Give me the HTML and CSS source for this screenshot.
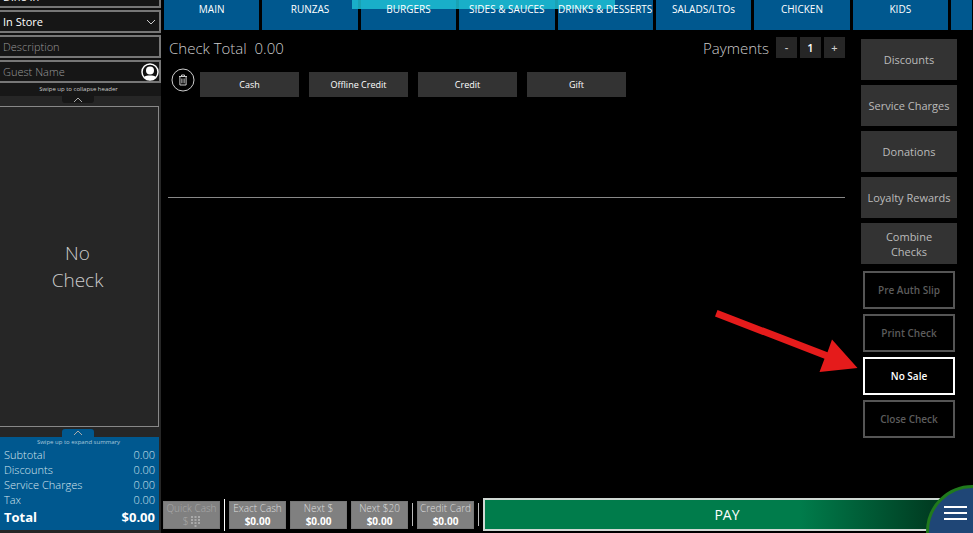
FILE: index.html
```html
<!DOCTYPE html>
<html lang="en">
<head>
    <meta charset="UTF-8">
    <meta name="viewport" content="width=device-width, initial-scale=1.0">
    <title>Check Payment</title>
    <link rel="stylesheet" href="styles.css">
</head>
<body>
    <div class="app">
        <aside class="sidebar">
            <form class="check-header">
                <div class="field">
                    <select aria-label="Order type"><option>Dine In</option></select>
                    <svg class="chevron" viewBox="0 0 10 6"><path d="M1 1l4 4 4-4"/></svg>
                </div>
                <div class="field">
                    <select aria-label="Revenue center"><option>In Store</option></select>
                    <svg class="chevron" viewBox="0 0 10 6"><path d="M1 1l4 4 4-4"/></svg>
                </div>
                <div class="field">
                    <input type="text" aria-label="Description" placeholder="Description">
                </div>
                <div class="field">
                    <input type="text" aria-label="Guest Name" placeholder="Guest Name">
                    <button type="button" class="guest-button" aria-label="Find guest">
                        <svg viewBox="0 0 18 18">
                            <circle cx="9" cy="9" r="8" fill="#111" stroke="#fff" stroke-width="1.5"/>
                            <circle cx="9" cy="7.5" r="4" fill="#fff"/>
                            <path d="M2.8 14.2C4.5 12.6 6.5 12.4 9 12.4s4.5.2 6.2 1.8A8 8 0 0 1 2.8 14.2z" fill="#fff"/>
                        </svg>
                    </button>
                </div>
            </form>
            <div class="swipe-hint">Swipe up to collapse header</div>
            <button class="handle" aria-label="Collapse header">
                <svg viewBox="0 0 10 6"><path d="M1 5l4-4 4 4"/></svg>
            </button>
            <div class="check-panel">No<br>Check</div>
            <button class="handle handle-blue" aria-label="Expand summary">
                <svg viewBox="0 0 10 6"><path d="M1 5l4-4 4 4"/></svg>
            </button>
            <div class="summary">
                <div class="summary-hint">Swipe up to expand summary</div>
                <table>
                    <tbody>
                        <tr><th scope="row">Subtotal</th><td>0.00</td></tr>
                        <tr><th scope="row">Discounts</th><td>0.00</td></tr>
                        <tr><th scope="row">Service Charges</th><td>0.00</td></tr>
                        <tr><th scope="row">Tax</th><td>0.00</td></tr>
                    </tbody>
                    <tfoot>
                        <tr><th scope="row">Total</th><td>$0.00</td></tr>
                    </tfoot>
                </table>
            </div>
        </aside>

        <main class="main">
            <nav class="tabs">
                <button><span>MAIN</span></button>
                <button><span>RUNZAS</span></button>
                <button><span>BURGERS</span></button>
                <button><span>SIDES &amp; SAUCES</span></button>
                <button><span>DRINKS &amp; DESSERTS</span></button>
                <button><span>SALADS/LTOs</span></button>
                <button><span>CHICKEN</span></button>
                <button><span>KIDS</span></button>
                <button class="tab-more" aria-label="More"></button>
                <div class="banner"></div>
            </nav>

            <div class="content">
                <section class="payment">
                    <div class="payment-top">
                        <h1>Check Total&nbsp; 0.00</h1>
                        <div class="stepper">
                            <span class="stepper-label">Payments</span>
                            <button aria-label="Fewer payments">-</button>
                            <button class="count">1</button>
                            <button aria-label="More payments">+</button>
                        </div>
                    </div>
                    <div class="tenders">
                        <button class="trash" aria-label="Remove payment">
                            <svg viewBox="0 0 24 24">
                                <circle cx="12" cy="12" r="11"/>
                                <path d="M8 8.5h8M10.5 8.5V7h3v1.5M8.9 8.5V17h6.2V8.5M10.9 10.5v4.8M13.1 10.5v4.8"/>
                            </svg>
                        </button>
                        <button class="tender">Cash</button>
                        <button class="tender">Offline Credit</button>
                        <button class="tender">Credit</button>
                        <button class="tender">Gift</button>
                    </div>
                </section>

                <section class="actions">
                    <button>Discounts</button>
                    <button>Service Charges</button>
                    <button>Donations</button>
                    <button>Loyalty Rewards</button>
                    <button>Combine<br>Checks</button>
                    <div class="outlined">
                        <button disabled>Pre Auth Slip</button>
                        <button disabled>Print Check</button>
                        <div class="callout">
                            <button>No Sale</button>
                            <svg class="arrow" viewBox="0 0 142 62">
                                <path d="M2.5 0L112.5 42.3 117 29.5 142.5 58 104.5 62 109.5 48.7 0 6.5z"/>
                            </svg>
                        </div>
                        <button disabled>Close Check</button>
                    </div>
                </section>
            </div>

            <footer class="pay-bar">
                <button class="quick" disabled>
                    <span>Quick Cash</span>
                    <span class="keypad">$
                        <svg viewBox="0 0 9 11">
                            <path d="M0 0h2v2H0zM3.5 0h2v2h-2zM7 0h2v2H7zM0 3h2v2H0zM3.5 3h2v2h-2zM7 3h2v2H7zM0 6h2v2H0zM3.5 6h2v2h-2zM7 6h2v2H7zM3.5 9h2v2h-2z"/>
                        </svg>
                    </span>
                </button>
                <span class="divider"></span>
                <button class="quick"><span>Exact Cash</span><b>$0.00</b></button>
                <button class="quick"><span>Next $</span><b>$0.00</b></button>
                <button class="quick"><span>Next $20</span><b>$0.00</b></button>
                <span class="divider short"></span>
                <button class="quick"><span>Credit Card</span><b>$0.00</b></button>
                <span class="divider short"></span>
                <button class="pay">PAY</button>
            </footer>
        </main>

        <button class="menu" aria-label="Menu">
            <svg viewBox="0 0 23 14"><path d="M0 1h23M0 7h23M0 13h23"/></svg>
        </button>
    </div>
</body>
</html>
```
FILE: styles.css
```css
* {
    box-sizing: border-box;
}
body {
    margin: 0;
    background: #000;
    color: #fff;
    font-family: "Open Sans", "Noto Sans", sans-serif;
    font-size: 11px;
}
button, input, select {
    font: inherit;
    color: inherit;
    margin: 0;
    padding: 0;
    border: none;
    border-radius: 0;
}
svg {
    display: block;
    fill: none;
}
.app {
    position: relative;
    display: flex;
    height: 100vh;
    overflow: hidden;
}

/* left column */
.sidebar {
    display: flex;
    flex-direction: column;
    flex: 0 0 161px;
    min-width: 0;
    background: #262626;
    padding-bottom: 3px;
}
/* header is scrolled partly out of view */
.check-header {
    display: flex;
    flex-direction: column;
    gap: 2px;
    margin-top: -15px;
    background: #111;
}
.field {
    display: flex;
    align-items: center;
    height: 23px;
    border: 2px solid #777;
    border-left: none;
    background: #161616;
    padding-right: 3px;
}
.field select, .field input {
    flex: 1;
    width: 100%;
    min-width: 0;
    height: 19px;
    padding-left: 3px;
    background: none;
    appearance: none;
    outline: none;
}
.field input::placeholder {
    color: #999;
    font-weight: 300;
    opacity: 1;
}
.chevron {
    width: 10px;
    height: 6px;
    stroke: #ccc;
}
.guest-button {
    background: none;
    margin-right: -3px;
}
.guest-button svg {
    width: 18px;
    height: 18px;
}
.swipe-hint, .summary-hint {
    text-align: center;
    font-size: 6px;
    line-height: 13px;
    color: #ccc;
    padding-right: 4px;
}
.swipe-hint {
    background: #171717;
}
.handle {
    display: flex;
    justify-content: center;
    align-items: center;
    flex: none;
    width: 32px;
    height: 7px;
    margin-left: 62px;
    background: #171717;
    border-radius: 0 0 3px 3px;
}
.handle svg {
    width: 10px;
    height: 6px;
    stroke: #aaa;
}
.handle-blue {
    height: 8px;
    background: #00588f;
    border-radius: 3px 3px 0 0;
}
.check-panel {
    flex: 1;
    display: flex;
    align-items: center;
    justify-content: center;
    margin: 3px 2px 2px 0;
    padding-right: 3px;
    border: 1px solid #888;
    border-left: none;
    text-align: center;
    font-size: 19px;
    line-height: 27px;
    font-weight: 300;
    color: #ccc;
}
.summary {
    margin-right: 2px;
    padding: 0 4px 2px;
    background: #00588f;
}
.summary-hint {
    padding-right: 2px;
    line-height: 10px;
    color: #a9c8dc;
}
.summary table {
    width: 100%;
    border-collapse: collapse;
}
.summary th, .summary td {
    padding: 0;
    font-weight: 300;
    line-height: 15px;
    color: #d5e4ee;
    text-align: left;
}
.summary td {
    text-align: right;
}
.summary tfoot th, .summary tfoot td {
    font-size: 13px;
    font-weight: 700;
    line-height: 21px;
    color: #fff;
}

/* right side */
.main {
    flex: 1;
    min-width: 0;
    display: flex;
    flex-direction: column;
}
.tabs {
    position: relative;
    display: flex;
    gap: 3px;
    height: 30px;
    padding: 0 1px 0 3px;
}
.tabs button {
    flex: 1;
    min-width: 0;
    background: #00588f;
    font-size: 10px;
    line-height: 14px;
    padding-bottom: 13px;
    white-space: nowrap;
}
/* labels stay above the banner */
.tabs span {
    position: relative;
    z-index: 1;
}
.tabs .tab-more {
    flex: 0 0 21px;
}
.banner {
    position: absolute;
    top: 0;
    left: 191px;
    width: 263px;
    height: 9px;
    background: rgba(29, 190, 212, 0.85);
}
.content {
    flex: 1;
    display: flex;
    gap: 16px;
    padding: 7px 16px 0 7px;
}
.payment {
    flex: 1;
    height: 161px;
    border-bottom: 1px solid #888;
}
.payment-top {
    display: flex;
    justify-content: space-between;
}
h1, .stepper-label {
    margin: 0;
    font-size: 15px;
    line-height: 22px;
    font-weight: 300;
    color: #ccc;
}
h1 {
    padding-left: 1px;
}
.stepper {
    display: flex;
    gap: 3px;
}
.stepper-label {
    padding-right: 4px;
}
.stepper button {
    width: 21px;
    height: 21px;
    background: #262626;
    color: #ccc;
    font-weight: 600;
}
.stepper .count {
    color: #fff;
}
.tenders {
    display: flex;
    align-items: center;
    gap: 10px;
    padding: 9px 0 0 3px;
}
.trash {
    background: none;
    margin-right: -5px;
    padding-bottom: 8px;
}
.trash svg {
    width: 24px;
    height: 24px;
    stroke: #ccc;
}
.tender {
    width: 99px;
    height: 25px;
    background: #333;
    font-size: 9px;
}
.actions {
    flex: 0 0 96px;
    display: flex;
    flex-direction: column;
    gap: 5px;
    padding-top: 2px;
}
.actions > button {
    height: 41px;
    background: #333;
    color: #bbb;
    line-height: 15px;
}
.outlined {
    display: flex;
    flex-direction: column;
    gap: 5px;
    padding: 2px 2px 0;
}
.outlined button {
    width: 100%;
    height: 38px;
    background: #000;
    border: 2px solid #fff;
    font-size: 10px;
    font-weight: 600;
}
.outlined button:disabled {
    border-color: #555;
    color: #5c5c5c;
}
.callout {
    position: relative;
}
.arrow {
    position: absolute;
    right: 98px;
    bottom: 23px;
    width: 142px;
    height: 62px;
    fill: #e51b1b;
    overflow: visible;
}

/* bottom bar */
.pay-bar {
    display: flex;
    align-items: center;
    gap: 4px;
    padding: 0 2px 2px;
}
.quick {
    display: flex;
    flex-direction: column;
    align-items: center;
    flex: 0 0 57px;
    height: 28px;
    background: #808080;
    border: 1px solid #777;
    font-size: 10px;
    line-height: 13px;
    font-weight: 300;
    color: #ddd;
    white-space: nowrap;
}
.quick b {
    color: #fff;
    font-weight: 700;
}
.quick:disabled {
    color: #aaa;
}
.keypad {
    display: flex;
    align-items: center;
    gap: 3px;
}
.keypad svg {
    width: 9px;
    height: 11px;
    fill: #aaa;
}
.divider {
    flex: 0 0 1px;
    height: 32px;
    background: #fff;
}
.divider.short {
    height: 23px;
    background: #bbb;
}
.pay {
    flex: 1;
    height: 33px;
    border: 2px solid #cfd8d3;
    background: linear-gradient(90deg, #007c4b 65%, #003d22 92%);
    font-size: 14px;
}
.menu {
    position: absolute;
    right: -46px;
    bottom: -45px;
    width: 93px;
    height: 93px;
    border: 3px solid #207a1c;
    border-radius: 50%;
    background: #1f4676;
}
.menu svg {
    position: absolute;
    top: 18px;
    left: 15px;
    width: 23px;
    height: 14px;
    stroke: #fff;
    stroke-width: 2;
}
```
